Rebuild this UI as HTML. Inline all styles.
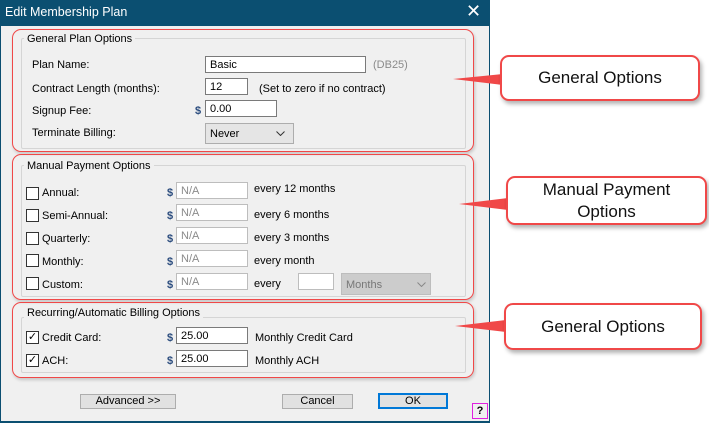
<!DOCTYPE html><html><head><style>
*{margin:0;padding:0;box-sizing:border-box}
body{width:709px;height:423px;background:#fff;position:relative;overflow:hidden;font-family:"Liberation Sans",sans-serif;font-size:11px;color:#000}
.a{position:absolute;white-space:nowrap}
.dlg{position:absolute;left:0;top:0;width:490px;height:423px;background:#f0f0f0;border:1px solid #0b4f71;border-bottom:2px solid #0b4f71}
.title{position:absolute;left:0;top:0;width:490px;height:26px;background:#0b4f71;color:#fff;font-size:12.5px;padding:5px 0 0 5px}
.grp{position:absolute;border:1px solid #d5d5d5;border-radius:2px}
.red{position:absolute;border:1.5px solid #f04848;border-radius:9px;box-shadow:1px 2px 3px rgba(0,0,0,.18)}
.in{position:absolute;background:#fff;border:1px solid #7a7a7a;padding:2px 0 0 4px;height:17px}
.na{color:#8a8a8a;border-color:#bdbdbd}
.cb{position:absolute;width:13px;height:13px;border:1px solid #333;background:#fff;font-size:11px;line-height:11px;text-align:center}
.d{position:absolute;color:#2b4c7e;font-weight:bold;font-size:11px}
.btn{position:absolute;background:#e1e1e1;border:1px solid #adadad;text-align:center;height:15px;line-height:13px}
.co{position:absolute;background:#fff;border:2px solid #f04848;border-radius:9px;box-shadow:2px 3px 4px rgba(0,0,0,.3);font-size:17px;text-align:center;color:#111}
.chev{position:absolute}
</style></head><body>
<div class="dlg"></div>
<div class="title">Edit Membership Plan<span class="a" style="left:466px;top:1px;font-size:18px;font-weight:normal">✕</span></div>

<div class="grp" style="left:21px;top:38px;width:445px;height:111px"></div>
<div class="a" style="left:24px;top:33px;background:#f0f0f0;padding:0 3px">General Plan Options</div>
<div class="red" style="left:12px;top:29px;width:462px;height:123px"></div>
<div class="a" style="left:32px;top:59px">Plan Name:</div>
<div class="in" style="left:205px;top:56px;width:161px">Basic</div>
<div class="a" style="left:373px;top:59px;color:#8a8a8a">(DB25)</div>
<div class="a" style="left:32px;top:83px">Contract Length (months):</div>
<div class="in" style="left:205px;top:78px;width:43px">12</div>
<div class="a" style="left:259px;top:83px">(Set to zero if no contract)</div>
<div class="a" style="left:32px;top:105px">Signup Fee:</div>
<div class="d" style="left:195px;top:105px">$</div>
<div class="in" style="left:205px;top:100px;width:72px">0.00</div>
<div class="a" style="left:32px;top:127px">Terminate Billing:</div>
<div class="in" style="left:205px;top:123px;width:89px;height:21px;background:#e5e5e5;border-color:#adadad;padding-top:4px">Never<svg class="chev" style="left:70px;top:7px" width="9" height="5"><path d="M0.5 0.5 L4.5 4.5 L8.5 0.5" stroke="#333" fill="none"/></svg></div>

<div class="grp" style="left:21px;top:165px;width:445px;height:132px"></div>
<div class="a" style="left:24px;top:160px;background:#f0f0f0;padding:0 3px">Manual Payment Options</div>
<div class="red" style="left:12px;top:154px;width:462px;height:146px"></div>

<div class="cb" style="left:26px;top:187px"></div><div class="a" style="left:42px;top:187px">Annual:</div>
<div class="cb" style="left:26px;top:209px"></div><div class="a" style="left:42px;top:210px">Semi-Annual:</div>
<div class="cb" style="left:26px;top:232px"></div><div class="a" style="left:42px;top:233px">Quarterly:</div>
<div class="cb" style="left:26px;top:254px"></div><div class="a" style="left:42px;top:256px">Monthly:</div>
<div class="cb" style="left:26px;top:277px"></div><div class="a" style="left:42px;top:279px">Custom:</div>
<div class="d" style="left:167px;top:187px">$</div><div class="in na" style="left:176px;top:182px;width:72px">N/A</div><div class="a" style="left:254px;top:183px">every 12 months</div>
<div class="d" style="left:167px;top:210px">$</div><div class="in na" style="left:176px;top:204px;width:72px">N/A</div><div class="a" style="left:254px;top:209px">every 6 months</div>
<div class="d" style="left:167px;top:233px">$</div><div class="in na" style="left:176px;top:227px;width:72px">N/A</div><div class="a" style="left:254px;top:232px">every 3 months</div>
<div class="d" style="left:167px;top:256px">$</div><div class="in na" style="left:176px;top:250px;width:72px">N/A</div><div class="a" style="left:254px;top:255px">every month</div>
<div class="d" style="left:167px;top:279px">$</div><div class="in na" style="left:176px;top:273px;width:72px">N/A</div><div class="a" style="left:254px;top:278px">every</div>
<div class="in" style="left:298px;top:273px;width:36px;border-color:#bdbdbd"></div>
<div class="in" style="left:341px;top:273px;width:90px;height:22px;background:#ccc;border-color:#bdbdbd;color:#777;padding-top:5px">Months<svg class="chev" style="left:75px;top:8px" width="9" height="5"><path d="M0.5 0.5 L4.5 4.5 L8.5 0.5" stroke="#888" fill="none"/></svg></div>

<div class="grp" style="left:21px;top:317px;width:445px;height:56px"></div>
<div class="a" style="left:24px;top:307px;background:#f0f0f0;padding:0 3px">Recurring/Automatic Billing Options</div>
<div class="red" style="left:12px;top:302px;width:462px;height:76px"></div>
<div class="cb" style="left:26px;top:331px">✓</div><div class="a" style="left:42px;top:332px">Credit Card:</div>
<div class="cb" style="left:26px;top:354px">✓</div><div class="a" style="left:42px;top:355px">ACH:</div>
<div class="d" style="left:167px;top:332px">$</div><div class="in" style="left:176px;top:327px;width:72px">25.00</div><div class="a" style="left:255px;top:332px">Monthly Credit Card</div>
<div class="d" style="left:167px;top:355px">$</div><div class="in" style="left:176px;top:350px;width:72px">25.00</div><div class="a" style="left:255px;top:355px">Monthly ACH</div>

<div class="btn" style="left:80px;top:394px;width:96px">Advanced &gt;&gt;</div>
<div class="btn" style="left:282px;top:394px;width:71px">Cancel</div>
<div class="btn" style="left:378px;top:393px;width:70px;height:16px;border:2px solid #0078d7">OK</div>
<div class="a" style="left:472px;top:403px;width:16px;height:16px;border:1px solid #e020e0;text-align:center;font-weight:bold;font-size:11px;line-height:14px">?</div>

<svg class="a" style="left:0;top:0" width="709" height="423">
<polygon points="453,79 503,74 503,85" fill="#f04848"/>
<polygon points="459,204 508,198 508,210" fill="#f04848"/>
<polygon points="455,326 506,320 506,332" fill="#f04848"/>
</svg>
<div class="co" style="left:500px;top:55px;width:200px;height:46px;line-height:42px">General Options</div>
<div class="co" style="left:506px;top:176px;width:201px;height:49px;line-height:22px;padding-top:1px">Manual Payment<br>Options</div>
<div class="co" style="left:504px;top:303px;width:198px;height:47px;line-height:43px">General Options</div>
</body></html>
